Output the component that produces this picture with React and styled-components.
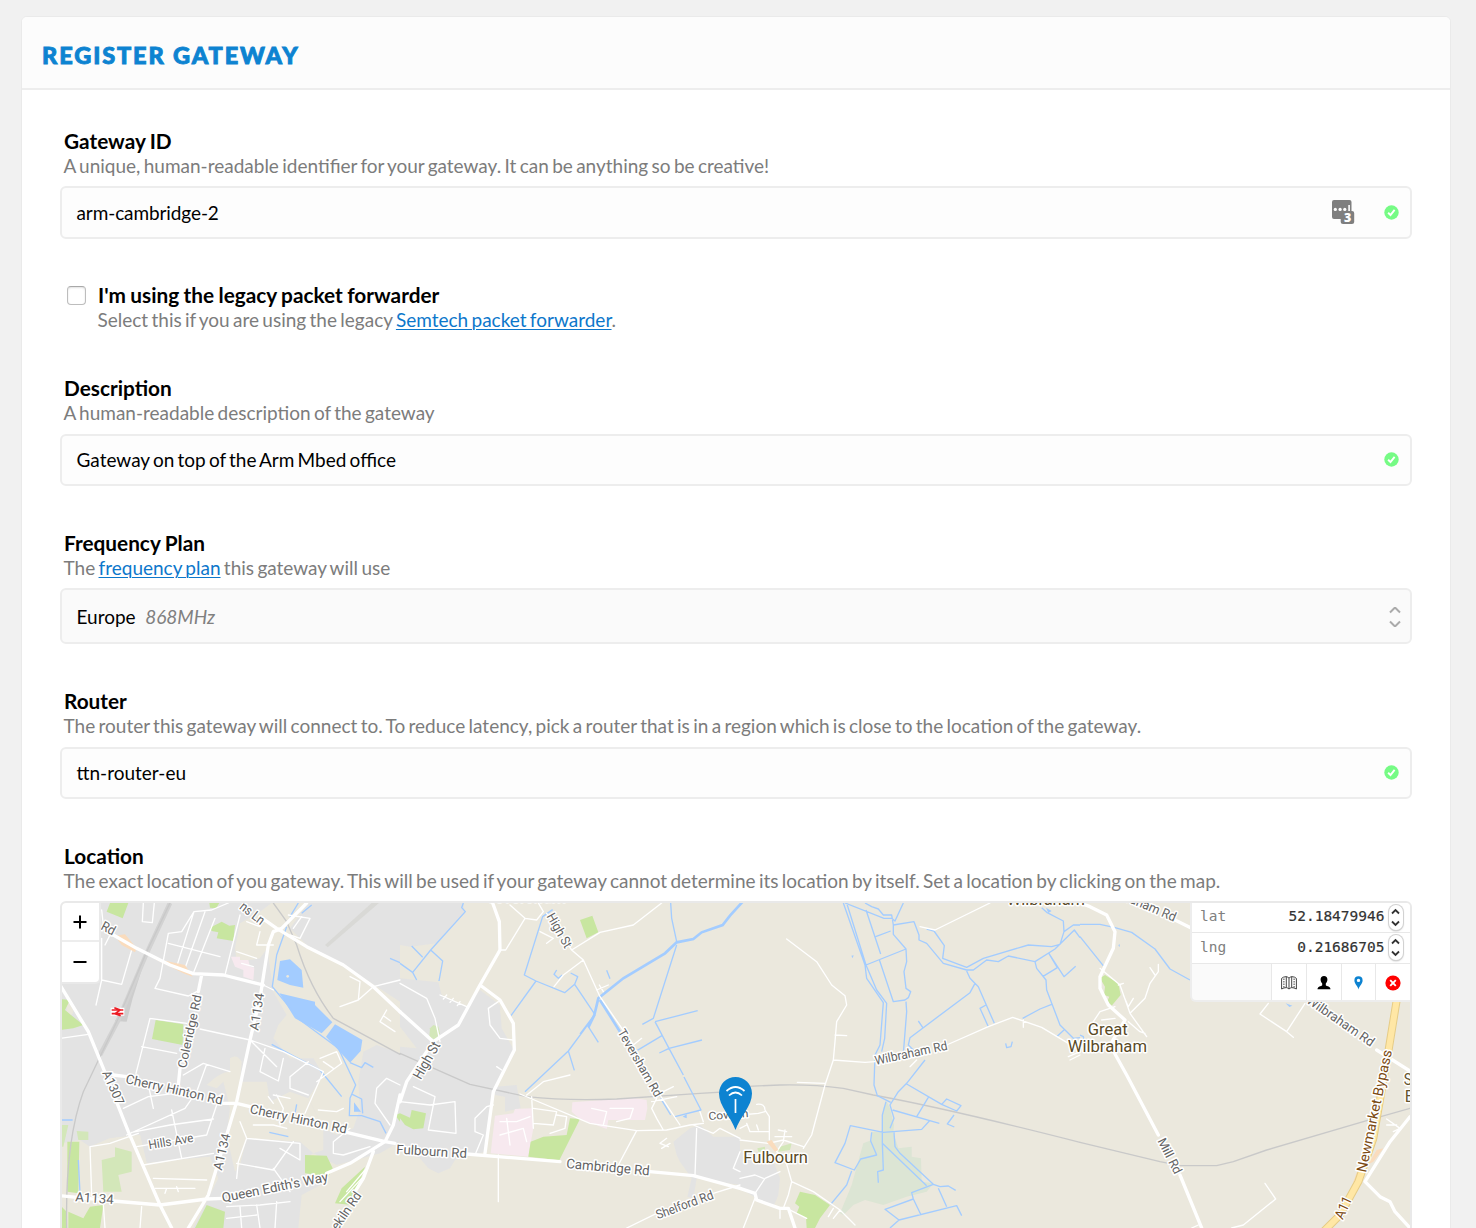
import React from "react";
import styled, { createGlobalStyle, css } from "styled-components";

const GlobalStyle = createGlobalStyle`
  * { box-sizing: border-box; }
  html, body { margin: 0; padding: 0; }
  body {
    height: 1228px;
    overflow: hidden;
    background: #f1f1f1;
    color: #000;
    font-family: Lato, "Open Sans", sans-serif;
  }
`;

const Page = styled.main`
  height: 1228px;
  padding: 16px 25px 0 21px;
  overflow: hidden;
`;

const Card = styled.section`
  height: 1300px;
  background: #fff;
  border: 1px solid #eaeaea;
  border-radius: 6px 6px 0 0;
`;

const CardHeader = styled.header`
  height: 73px;
  padding: 5px 20px 0;
  display: flex;
  align-items: center;
  background: #fcfcfc;
  border-bottom: 2px solid #ededed;
  border-radius: 5px 5px 0 0;
`;

const Title = styled.h1`
  margin: 0;
  color: #0d83d1;
  font-size: 23.5px;
  font-weight: 900;
  line-height: 30px;
  letter-spacing: 1.9px;
  text-transform: uppercase;
  -webkit-text-stroke: 0.9px #0d83d1;
`;

const Form = styled.form`
  display: flex;
  flex-direction: column;
  padding: 39px 38px 0;
`;

const Field = styled.div`
  display: flex;
  flex-direction: column;
  margin-bottom: ${(p) => p.$after || 45}px;
`;

const Caption = styled.div`
  padding-left: ${(p) => (p.$flush ? 0 : 4)}px;
  margin-bottom: ${(p) => p.$gap || 0}px;
`;

const Label = styled.label`
  display: block;
  font-size: 20.8px;
  font-weight: 700;
  line-height: 24px;
  word-spacing: -0.7px;
  white-space: nowrap;
`;

const Hint = styled.div`
  color: #7c7c7c;
  font-size: 19px;
  line-height: 25px;
  margin-bottom: 1px;
  margin-left: -0.5px;
  word-spacing: -1.53px;
  white-space: nowrap;
`;

const Link = styled.a`
  color: #0d77cb;
  text-decoration: underline;
  text-decoration-thickness: 1px;
  text-underline-offset: 2px;
`;

const Box = styled.div`
  display: flex;
  align-items: center;
  height: ${(p) => p.$height || 52}px;
  padding: ${(p) => (p.$select ? 1 : 0)}px 11px 0 14.5px;
  background: ${(p) => (p.$select ? "#fafafa" : "#fdfdfd")};
  border: 2px solid #ededed;
  border-radius: 6px;
  font-size: 19px;
  line-height: 24px;
`;

const Value = styled.span`
  flex: 1;
  word-spacing: -1.65px;
  letter-spacing: ${(p) => p.$spacing || 0}px;
`;

const Muted = styled.em`
  margin-left: 9.5px;
  color: #808080;
`;

const Icon = styled.svg`
  display: block;
  flex: none;
  margin: ${(p) => p.$margin || 0};
`;

const CheckRow = styled.div`
  display: flex;
  gap: 12px;
  padding-left: 7px;
  margin-bottom: 43px;
`;

const Checkbox = styled.span`
  width: 19px;
  height: 19px;
  margin-top: 3px;
  background: #fff;
  border: 1px solid #bdbdbd;
  border-top-color: #a8a8a8;
  border-radius: 4px;
  box-shadow: inset 0 1px 2px rgba(0, 0, 0, 0.12);
`;

const MapFrame = styled.div`
  position: relative;
  height: 400px;
  border: 2px solid #e9e9e9;
  border-radius: 6px;
  overflow: hidden;
  background: #ebe8dd;
`;

const MapSvg = styled.svg`
  display: block;
`;

const ZoomControl = styled.div`
  position: absolute;
  top: 0;
  left: 0;
  width: 39px;
  background: #fff;
  border: solid #e9e9e9;
  border-width: 0 2px 2px 0;
  border-radius: 0 0 6px 0;
`;

const ZoomButton = styled.div`
  display: flex;
  align-items: center;
  justify-content: center;
  height: ${(p) => (p.$first ? 39 : 40)}px;
  padding-right: 1px;
  ${(p) =>
    p.$first &&
    css`
      border-bottom: 2px solid #ededed;
    `}
`;

const Panel = styled.div`
  position: absolute;
  top: 0;
  right: 0;
  width: 220px;
  background: #fafafa;
  border: solid #ededed;
  border-width: 0 0 2px 2px;
  border-radius: 0 0 0 6px;
`;

const Coord = styled.div`
  display: flex;
  align-items: center;
  height: ${(p) => p.$height}px;
  padding: 0 7.5px 0 8px;
  background: #fff;
  border-bottom: 1px solid #e8e8e8;
  font-family: "DejaVu Sans Mono", "Liberation Mono", monospace;
  font-size: 14.5px;
  line-height: 18px;
  color: #808080;
`;

const CoordValue = styled.span`
  flex: 1;
  padding-right: 4px;
  padding-bottom: ${(p) => p.$lift || 2}px;
  text-align: right;
  color: #333;
  -webkit-text-stroke: 0.2px #333;
`;

const CoordName = styled.span`
  padding-bottom: ${(p) => p.$lift || 2}px;
`;

const Stepper = styled.span`
  display: flex;
  align-items: center;
  justify-content: center;
  width: 14px;
  height: 25px;
  margin-top: -1px;
  background: #fff;
  border-radius: 8px;
  box-shadow: 0 0 0 1px #d2d2d2, 0 1px 2px rgba(0, 0, 0, 0.35);
`;

const Tools = styled.div`
  display: flex;
  justify-content: flex-end;
  height: 36px;
`;

const Tool = styled.div`
  display: flex;
  align-items: center;
  justify-content: center;
  width: ${(p) => p.$width || 35}px;
  padding-top: 1px;
  background: #fff;
  border-left: 1px solid #e8e8e8;
`;

const Pin = styled.svg`
  position: absolute;
  left: 657px;
  top: 174px;
`;

/* Map geometry: four tiles, each 1020 units wide, three units to a pixel. */
const urban = [
  "M0 20H640L600 50 540 85 525 160 530 200 600 190 622 160 640 290 680 360 655 390 640 430 690 490 760 490 790 540 745 610 790 700 830 720 880 700 900 640 895 560 910 470 950 450 1020 475V740L960 775 830 810 760 775 735 790 735 840 800 860 725 900 715 999H390L430 930 450 870 430 830 450 785 260 805 240 720 150 730 90 755 60 735 0 745Z M745 24H1020V320L860 215 740 150 690 100Z",
  "M0 24H190L195 55 110 145 30 155 0 150Z M0 250 50 255 115 262 125 300 200 335 240 285 300 330 305 400 345 470 280 590 255 770 165 795 150 820 115 835 85 820 60 790 0 770Z M285 575 350 570 362 640 315 650 315 605 285 600Z M820 740 870 700 900 690 940 725 1020 725V870L890 850 880 910 862 905 875 850 840 800 830 780Z",
  "M0 770 60 790 100 800 120 850 115 900 100 935 50 910 0 880Z",
  "",
];
const landPatches = [
  "M510 490Q530 475 545 500L540 560 620 560 630 620 690 590 745 610 790 700 790 765 760 775 720 740 560 730 540 810 525 830 500 720 510 640 490 560 470 580 440 570Q480 530 510 530Z M20 320Q60 350 20 370Z M0 750 90 755 150 730 240 720 260 805 450 785 475 850 400 999H0Z",
  "M0 395 50 460 0 455Z M300 345 335 370 335 405 310 395Z",
  "",
  "",
];
const greens = [
  "M150 24H205L188 70 140 50Z M448 24H478L468 40 450 38Z M450 98 485 80 508 92 525 90 520 138 470 130 475 112 455 108Z M0 312 30 315 15 345 45 370 70 390 40 400 0 405Z M287 375 370 388 368 450 276 432Z M735 780 800 782 818 820 805 845 735 835Z M915 815 875 930 825 925 845 880Z M22 740 58 740 55 895 22 890Z M25 950 70 970 90 935 130 930 120 999H25Z M440 930 495 950 490 999H405Z M0 930 20 950V999H0Z M1005 660 1020 655V680Z",
  "M540 75 577 62 595 112 560 130Z M35 645 78 655 70 700 40 703 15 690 0 670V655L30 668Z M510 670 540 672 478 796 385 785 392 740 430 725 500 720Z",
  "M180 890 225 900 270 930 240 970 225 999H200L198 968 170 955 178 935 165 925Z",
  "M60 250 75 240 115 265 122 300 105 320 95 332 82 318 88 305 72 300 75 275Z",
];
const paleGreens = [
  "M50 708 85 710 85 735 55 735Z M125 795 165 785 165 757 215 770 215 830 175 840 185 890 130 890Z M0 690 25 690 10 755 0 755Z",
  "M90 400 100 390 115 395 120 415 105 435 88 425Z",
  "M120 755 155 745 150 765 115 770Z M52 760 75 755V770H55Z",
  "",
];
const wetlands = [
  "",
  "",
  "M440 620 450 640 462 690 460 715 475 760 515 755 515 785 543 790 545 860 580 865 560 890 500 905 430 930 375 915 340 930 310 960 300 955 335 870 360 780 370 745 395 735 395 710 425 712 430 640Z",
  "",
];
const pinks = [
  "M513 185 540 185 540 195 565 195 570 215 583 218 580 255 550 245 550 225 525 215Z",
  "M285 662 340 655 345 642 395 640 400 700 385 785 272 775Z M517 622 700 608 740 615 742 640 735 675 625 675 620 702 540 672 515 650Z",
  "",
  "",
];
const oranges = [
  "M165 122 195 118 230 160 225 172 185 150Z M280 190 375 210 398 245 370 235Z",
  "",
  "M80 740 95 735 115 765 105 770Z",
  "M910 760 880 800 865 808 890 765Z M835 820 820 860 830 870 845 830Z",
];
const ponds = [
  "M660 198 690 193 725 225 730 278 690 270 652 255Z M658 295 765 320 765 330 817 382 785 415 705 370Z M825 388 907 435 902 468 870 503 798 425Z M882 622 903 650H882Z",
  "M848 665 860 658V670Z",
  "M918 38 935 48 925 54Z M334 182 341 181 338 190Z",
  "M617 325 637 332 628 336Z M115 150 120 148 118 157Z",
];
const streams = [
  "M680 95 650 180 637 275 720 375 835 460 887 570 870 610 868 662 905 662 960 680 978 715 M755 30 725 55 M715 24 690 65 M635 448 780 525 845 605 M710 628 705 655 M628 712 685 725 M870 503 905 518 915 503 940 517 M877 598 905 612 908 655 M0 675H38 M990 190 1020 203 M55 795 60 895",
  "M190 24 185 38 196 50 92 165 38 232 50 255 M92 165 128 198 117 258 M35 153 68 187 M0 205 38 232 M458 44 428 65 373 240 408 258 494 293 524 268 533 245 512 234 M408 258 333 362 M524 268 583 356 M470 225 462 238 475 250 487 240 M620 226 630 251 M565 395 595 442 M540 417 583 360 M585 360 505 468 375 590 M505 468 523 526 M812 24 815 70 830 140 M830 150 760 370 727 388 M765 380 893 347 M765 380 807 460 850 540 M778 474 807 460 906 435 M786 422 712 466 M852 546 903 645 825 665 M782 610 812 660",
  "M310 24 375 210 380 250 430 323 420 450 405 480 402 570 412 602 452 622 M320 24 378 210 410 285 440 325 434 430 425 470 M315 24 432 70 455 70 465 78 490 24 M375 24 395 35 415 42 430 60 455 60 460 90 522 80 537 120 537 135 560 145 610 205 680 225 700 225 740 195 775 200 805 183 885 200 M378 45 422 177 M407 125 452 108 M460 90 460 118 498 162 500 200 492 230 498 280 512 290 505 308 495 315 460 320 418 194 M378 210 498 162 M498 320 500 350 490 475 M560 102 582 108 613 152 608 190 680 217 730 190 865 150 935 155 960 148 972 110 970 78 920 52 905 38 M972 110 1000 90 1020 90 M885 200 945 162 1003 105 1020 128 M885 200 890 220 918 255 920 285 960 390 1000 430 1020 428 M908 245 952 218 927 176 972 245 1007 214 M935 328 900 342 848 370 M950 425 972 405 M680 228 690 250 715 275 763 385 M738 330 720 340 745 395 M705 265 690 293 510 428 505 450 530 475 M535 378 548 397 M555 495 500 565 475 590 450 630 462 670 450 700 M500 567 605 628 650 648 663 632 620 612 605 628 M565 607 530 665 M458 645 598 685 M642 660 622 687 643 696 M568 678 545 703 430 712 331 692 315 745 285 803 343 825 362 792 410 780 392 738 395 712 M438 620 427 660V745L430 825 413 830 415 863 M335 828 320 870 272 928 M427 745 560 872 M462 712 465 755 480 775 580 868 600 875 625 873 647 886 M580 868 515 893 520 912 542 958 M595 880 620 935 M520 912 435 943 477 975 650 932 665 962 M477 975 450 999 M797 445 800 458 813 455 817 440",
  "M0 88H60L105 98 155 112 225 162 270 222 330 255 M0 125 72 215 M0 420 10 425 12 435",
];
const rails = [
  "M330 24 260 170 175 370 70 590Q15 740 20 999 M640 24 680 80 710 150Q750 280 820 370L1020 478",
  "M0 475 210 568 380 605Q500 618 650 612L900 595 1020 588",
  "M-40 577 120 570Q220 568 310 580L400 600Q620 640 1020 742",
  "M0 742 240 800 300 812H410L460 800 560 765 860 677 990 640",
];
const mainRoads = [
  "M160 120 230 160 330 210 400 236 490 240 610 270 M425 240 415 290 M740 24 665 100 640 110 625 150 600 310 570 435 530 620 500 720 445 900 385 999 M600 65 650 100 740 155 850 210 940 275 1020 350 M0 270 85 410 130 520 205 710 300 930 335 999 M0 902 160 918 300 930 440 912 490 910 M800 835 870 805 975 740 1000 690 1020 600 M160 540 200 545 M490 625 530 625 570 635 M860 712 975 740 1005 745 M940 770 910 850 885 890 M360 520 355 570",
  "M0 350 100 440 175 390 240 270 300 165 298 80 278 24 M240 270 300 315 340 385 343 465 280 590 265 700 255 775 M100 440 20 560 0 620 M200 777 480 800 M750 830 880 842 1020 880",
  "M0 880 45 895 50 915 120 940 145 940 165 999",
  "M0 24 30 35 80 60 105 110 100 160 60 245 60 280 85 330 135 375 90 450 140 540 235 720 M300 840 365 999 M285 75 335 100 M890 465 990 528 M990 665 930 740 855 860 900 905 930 920 945 950 990 999",
];
const localRoads = [
  "M125 45 130 90 155 110 135 150 M215 165 185 268 125 255 108 330 M125 255V130 M250 24 247 80 277 83 283 24 M325 115 300 250 285 280 385 303 410 290 M325 115 365 110 402 50 455 45 505 24 M325 145 480 185 M402 50 350 215 M435 50 375 220 M465 70 400 235 M540 60 495 240 M610 270 640 285 M270 370 228 535 M270 370 380 385 M245 455 350 475 M420 402 570 435 670 470 790 530 M440 508 410 590 375 640 200 720 M370 540 430 505 510 530 M190 640 265 605 390 590 M215 712 330 690 460 672 M230 755 440 720 480 600 M250 810 460 775 M265 570 280 640 M335 645 365 790 M570 435 650 515 M615 460 600 530 655 558 670 490 M745 500 690 545 690 580 745 600 M790 530 735 655 M780 490 830 470 845 505 770 560 M790 500 820 520 M1020 570 980 550 950 580 945 625 990 690 M820 740 820 775 850 780 930 755 M820 740 870 700 M560 730 720 745 720 795 660 760 M540 680 560 730 535 800 530 850 M530 805 640 825 700 740 M640 820 690 890 M500 935 600 930 690 920 M500 970 590 960 M540 935 545 999 M590 930 600 999 M650 920 645 999 M90 755 95 900 M90 755 150 745 235 715 M280 850 440 855 M285 880 405 880 M320 880 315 895 M350 875 355 890 M245 935 240 999 M130 930 135 999 M0 430 85 418 M600 110 590 150 640 150 M560 80 600 95 M530 170 590 190 M545 205 580 215 M870 245 900 260 895 315 940 275 1020 255 M895 315 840 335 M980 345 960 380 1005 410 M970 362 992 378 M860 890 915 825 M840 920 905 850 M775 645 830 650 850 640 M650 600 670 640 660 690 M580 690 640 690 680 700 M625 605 640 625 M640 600 690 610 M685 60 750 70 720 130 690 120 M725 65 700 100",
  "M298 165 317 165 375 70 330 30 M375 70 410 75 430 50 415 24 M440 55 515 165 550 195 600 305 700 450 M515 165 600 112 700 90 785 24 M550 195 490 240 462 275 M420 110 460 130 440 145 M590 285 625 270 M598 270 610 290 M700 450 725 430 M780 600 840 690 M790 590 820 575 M755 620 830 605 M360 597 570 685 710 707 800 705 870 690 910 685 M380 600 430 560 510 540 M395 605 400 700 M400 640 470 650 460 690 400 685 M470 660 500 665 495 700 450 715 M710 707 655 810 M770 610 755 640 770 670 790 705 M800 730 780 745 805 755 M785 760 810 745 M890 700 885 840 M0 265 80 310 105 370 120 440 M120 300 200 335 M140 300 130 312 M160 310 150 322 M180 320 172 332 M295 320 265 340 270 390 300 430 340 435 M0 620 90 630 165 620 168 715 85 705 105 605 40 575 M225 780 250 720 225 710 225 670 260 635 280 630 M290 515 305 525 M295 780V920 M680 999 770 955 M940 895 1020 870 M880 690 940 715 960 700 1020 730 M900 650 910 680 M575 640 620 650 610 690 M630 640 700 640 690 670 650 680 M300 680 350 680 390 665 M300 720 370 700 380 740 M320 670 330 750 M1020 770 1000 820 1020 830",
  "M140 132 230 200 275 270 315 302 320 330 290 380 285 440 280 495 255 570 215 720 190 760 M280 495 375 502 405 500 M285 420 320 422 M255 565 172 562 M540 95 585 105 750 24 M510 515 530 495 M620 450 745 395 818 367 905 397 985 445 M850 375V397 M0 735 85 745 130 735 190 755 M50 628Q75 625 75 645L88 665 88 735 M0 660 55 655 75 650 M20 685 30 710 85 710 M50 690 55 705 M115 705 140 710 M135 705 130 740 M155 725 105 725 M130 740 110 770 135 790 155 860 220 890 300 945 345 990 M45 895 75 850 120 830 M155 860 145 900 130 940 M0 850 45 840 70 850 M120 945 120 970 M140 940 200 970 M280 940 265 965 M300 945 280 970 M45 910 10 999 M985 485 1020 470 M0 700 20 690",
  "M540 357 620 410 640 427 M540 357 565 325 M620 410 675 325 M60 220 120 270 150 355 200 425 M115 270 130 265 M130 300 145 335 160 310 M150 355 195 310 210 265 235 230 235 208 M210 218 225 240 M145 380 180 410 195 415 M65 375 105 370 M40 380 60 350 105 335 M555 865 587 912 490 990 455 999 M0 480 -30 495 M335 999 355 990 M920 672 960 700 940 710 M920 690 950 690",
];

const roadGrey = "#636363";
/* text, start x, start y, end x, end y, size, colour */
const labels = [
  ["Rd", 120, 102, 158, 122, 40],
  ["ns Ln", 536, 40, 602, 91, 40],
  ["Coleridge Rd", 378, 521, 425, 302, 37],
  ["A1134", 595, 408, 612, 296, 38],
  ["A1307", 126, 533, 170, 633, 38],
  ["Cherry Hinton Rd", 195, 564, 485, 629, 39],
  ["Cherry Hinton Rd", 568, 654, 858, 716, 39],
  ["Hills Ave", 268, 763, 402, 740, 37],
  ["A1134", 485, 828, 511, 719, 38],
  ["A1134", 45, 919, 160, 927, 39],
  ["Queen Edith's Way", 488, 922, 806, 858, 39],
  ["ekiln Rd", 833, 1008, 906, 902, 39],
  ["Teversham", 1278, 22, 1518, 22, 46, "#66542e"],
  ["High St", 1459, 64, 1515, 162, 39],
  ["High St", 1082, 556, 1142, 450, 42],
  ["Teversham Rd", 1672, 411, 1786, 609, 37],
  ["Fulbourn Rd", 1008, 776, 1220, 789, 39],
  ["Cambridge Rd", 1518, 819, 1768, 841, 40],
  ["Shelford Rd", 1793, 973, 1963, 910, 38],
  ["Cowlan", 1946, 675, 2066, 666, 33],
  ["Fulbourn", 2050, 803, 2244, 803, 49, "#5a4a26"],
  ["Wilbraham Rd", 2447, 510, 2664, 464, 38],
  ["Wilbraham", 2840, 30, 3075, 30, 50, "#5a4a26"],
  ["Great", 3083, 420, 3203, 420, 47, "#5a4a26"],
  ["Wilbraham", 3023, 471, 3261, 471, 49, "#5a4a26"],
  ["raham Rd", 3196, 18, 3342, 80, 39],
  ["Wilbraham Rd", 3737, 322, 3932, 456, 39],
  ["Mill Rd", 3292, 737, 3344, 840, 38],
  ["Newmarket Bypass", 3918, 834, 3996, 468, 42, "#7b4a12"],
  ["A11", 3848, 976, 3877, 912, 42, "#7b4a12"],
  ["S", 4031, 570, 4056, 570, 48, "#66542e"],
  ["Bo", 4034, 620, 4090, 620, 48, "#66542e"],
];

function Layer({ tiles, ...paint }) {
  return (
    <g strokeLinejoin="round" strokeLinecap="round" fill="none" {...paint}>
      {tiles.map((d, i) =>
        d ? <path key={i} d={d} transform={`translate(${i * 1020})`} /> : null
      )}
    </g>
  );
}

function MapLabel({ text, x, y, x2, y2, size, color }) {
  const length = Math.hypot(x2 - x, y2 - y);
  const angle = (Math.atan2(y2 - y, x2 - x) * 180) / Math.PI;
  return (
    <text
      transform={`translate(${x} ${y}) rotate(${angle})`}
      fontSize={size}
      textLength={length}
      lengthAdjust="spacingAndGlyphs"
      fill={color || roadGrey}
    >
      {text}
    </text>
  );
}

function MapDrawing() {
  return (
    <MapSvg width="1348" height="325" viewBox="6 24 4044 975">
      <rect width="4080" height="1000" fill="#ebe8dd" />
      <Layer tiles={urban} fill="#e3e3e3" />
      <Layer tiles={landPatches} fill="#ebe8dd" />
      <Layer tiles={wetlands} fill="#dce5d4" />
      <Layer tiles={pinks} fill="#f7e9ef" />
      <Layer tiles={paleGreens} fill="#d3e7b9" />
      <Layer tiles={greens} fill="#c8e6a0" />
      <Layer tiles={ponds} fill="#a3ccff" />
      <path d="M795 150 935 24H957L803 157Z" fill="#d9d9d6" />
      <path d="M242 200 210 300 165 378 200 380 218 310 245 225Z" fill="#cdcdcd" />
      <path d="M330 24 260 175 175 375 120 480" stroke="#d2d2d2" strokeWidth="14" fill="none" />
      <Layer tiles={rails} stroke="#c9c9c9" strokeWidth="4" />
      <Layer tiles={streams} stroke="#a3ccff" strokeWidth="4" strokeLinecap="butt" />
      <path
        d="M2050 18 2010 62 1988 90 1925 112 1900 132 1850 142 1815 175 1690 250 1615 310 1603 360 1585 397 M1620 315 1680 410"
        stroke="#a3ccff" strokeWidth="8" fill="none"
      />
      <circle cx="683" cy="244" r="4" fill="#ebe8dd" />
      <Layer tiles={localRoads} stroke="#fff" strokeWidth="4" />
      <Layer tiles={oranges} fill="#fadcbd" />
      <Layer tiles={mainRoads} stroke="#fff" strokeWidth="10" />
      <g fill="none" strokeLinejoin="round">
        <path d="M4011 310 3985 470 3940 730 3895 860 3840 960 3785 1015" stroke="#e6cc86" strokeWidth="24" />
        <path d="M4011 310 3985 470 3940 730 3895 860 3840 960 3785 1015" stroke="#ffe7a5" strokeWidth="18" />
      </g>
      <path d="M152 350H193" stroke="#fff" strokeWidth="24" />
      <path d="M155 345H190M155 356H190M163 338 181 345 165 356 182 362" stroke="#ed1c24" strokeWidth="5" fill="none" />
      <g
        fontFamily="Roboto, 'Open Sans', sans-serif"
        stroke="#fff" strokeWidth="9" strokeLinejoin="round" paintOrder="stroke"
      >
        {labels.map(([text, x, y, x2, y2, size, color], i) => (
          <MapLabel key={i} {...{ text, x, y, x2, y2, size, color }} />
        ))}
      </g>
    </MapSvg>
  );
}

const ValidIcon = () => (
  <Icon width="15" height="15" viewBox="0 0 15 15" $margin="0 0 1px">
    <circle cx="7.5" cy="7.5" r="7.2" fill="#76fb85" />
    <path d="M4.1 7.7 6.5 10 10.6 4.9" stroke="#fff" strokeWidth="1.9" fill="none" />
  </Icon>
);

const PasswordIcon = () => (
  <Icon width="23" height="25" viewBox="0 0 23 25" $margin="0 29px 0 0">
    <path d="M2 0H17.5Q19.5 0 19.5 2V11H20Q22.2 11 22.2 13V22Q22.2 24 20 24H11Q8.7 24 8.7 22V19H2Q0 19 0 17V2Q0 0 2 0Z" fill="#7f7f7f" />
    <g fill="#fff">
      <circle cx="3.3" cy="9.4" r="1.6" />
      <circle cx="8.1" cy="9.4" r="1.6" />
      <circle cx="12.8" cy="9.4" r="1.6" />
      <rect x="16.3" y="5" width="1.6" height="6" />
    </g>
    <text x="15.6" y="22.2" textAnchor="middle" fontFamily="Open Sans, sans-serif" fontWeight="800" fontSize="12.5" fill="#fff">3</text>
  </Icon>
);

const Chevrons = ({ width, height, color, weight, gap, margin }) => {
  const m = height / 2;
  const w = width / 2;
  return (
    <Icon width={width} height={height} $margin={margin}>
      <path
        d={`M1 ${m - gap} L${w} ${m - gap - w + 1} L${width - 1} ${m - gap} M1 ${m + gap} L${w} ${m + gap + w - 1} L${width - 1} ${m + gap}`}
        stroke={color} strokeWidth={weight} fill="none"
      />
    </Icon>
  );
};

const StepperArrows = () => (
  <Stepper>
    <Chevrons width={9} height={19} color="#333" weight={1.8} gap={4} />
  </Stepper>
);

function Described({ label, hint, gap }) {
  return (
    <Caption $gap={gap}>
      <Label>{label}</Label>
      <Hint>{hint}</Hint>
    </Caption>
  );
}

export default function App() {
  return (
    <>
      <GlobalStyle />
      <Page>
        <Card>
          <CardHeader>
            <Title>Register Gateway</Title>
          </CardHeader>
          <Form>
            <Field $after={44}>
              <Described gap={7} label="Gateway ID" hint="A unique, human-readable identifier for your gateway. It can be anything so be creative!" />
              <Box $height={53}>
                <Value $spacing={-0.1}>arm-cambridge-2</Value>
                <PasswordIcon />
                <ValidIcon />
              </Box>
            </Field>

            <CheckRow>
              <Checkbox />
              <Caption $flush>
                <Label>I'm using the legacy packet forwarder</Label>
                <Hint>
                  Select this if you are using the legacy <Link>Semtech packet forwarder</Link>.
                </Hint>
              </Caption>
            </CheckRow>

            <Field>
              <Described gap={8} label="Description" hint="A human-readable description of the gateway" />
              <Box>
                <Value>Gateway on top of the Arm Mbed office</Value>
                <ValidIcon />
              </Box>
            </Field>

            <Field>
              <Described
                gap={7}
                label="Frequency Plan"
                hint={<>The <Link>frequency plan</Link> this gateway will use</>}
              />
              <Box $height={56} $select>
                <Value>Europe<Muted>868MHz</Muted></Value>
                <Chevrons width={12} height={20} color="#aaa" weight={2} gap={4.5} margin="0 -2px 0 0" />
              </Box>
            </Field>

            <Field>
              <Described gap={8} label="Router" hint="The router this gateway will connect to. To reduce latency, pick a router that is in a region which is close to the location of the gateway." />
              <Box>
                <Value>ttn-router-eu</Value>
                <ValidIcon />
              </Box>
            </Field>

            <Field>
              <Described gap={7} label="Location" hint="The exact location of you gateway. This will be used if your gateway cannot determine its location by itself. Set a location by clicking on the map." />
              <MapFrame>
                <MapDrawing />
                <Pin width="33" height="53" viewBox="0 0 33 53">
                  <path d="M16.5 53C12 40 0 29 0 16.5A16.5 16.5 0 0 1 33 16.5C33 29 21 40 16.5 53Z" fill="#0d83d1" />
                  <path d="M7.5 14Q16.5 6 25.5 14M10 18.5Q16.5 12.5 23 18.5M16.5 22V36" stroke="#fff" strokeWidth="1.7" fill="none" />
                </Pin>
                <ZoomControl>
                  <ZoomButton $first>
                    <Icon width="14" height="14"><path d="M.5 7H13.5M7 .5V13.5" stroke="#000" strokeWidth="2" /></Icon>
                  </ZoomButton>
                  <ZoomButton>
                    <Icon width="14" height="14"><path d="M.5 7H13.5" stroke="#000" strokeWidth="2" /></Icon>
                  </ZoomButton>
                </ZoomControl>
                <Panel>
                  <Coord $height={30}>
                    <CoordName $lift={4}>lat</CoordName>
                    <CoordValue $lift={4}>52.18479946</CoordValue>
                    <StepperArrows />
                  </Coord>
                  <Coord $height={31}>
                    <CoordName>lng</CoordName>
                    <CoordValue>0.21686705</CoordValue>
                    <StepperArrows />
                  </Coord>
                  <Tools>
                    <Tool>
                      <Icon width="16" height="14" viewBox="0 0 16 14" fill="none" stroke="#444" strokeWidth="1">
                        <path d="M.6 2.4Q2 .8 5.3 .6Q7 1 8 2.2Q9 1 10.7 .6Q14 .8 15.4 2.4V13Q13 11.6 10.7 11.6Q9 12 8 13Q7 12 5.3 11.6Q3 11.6 .6 13ZM5.3 .6V11.6M8 2.2V13M10.7 .6V11.6" />
                        <path d="M2.9 2.5V11.5M13.1 2.5V11.5" strokeDasharray="1.5 1" />
                      </Icon>
                    </Tool>
                    <Tool>
                      <Icon width="14" height="14" viewBox="0 0 14 14">
                        <path d="M7 0C9.2 0 10.4 1.4 10.4 3.5C10.4 5.4 9.6 6.6 8.8 7.5V9.3C10 10.5 13.4 10.3 13.5 13.2H.5C.6 10.3 4 10.5 5.2 9.3V7.5C4.4 6.6 3.6 5.4 3.6 3.5C3.6 1.4 4.8 0 7 0Z" />
                      </Icon>
                    </Tool>
                    <Tool $width={34}>
                      <Icon width="9" height="14" viewBox="0 0 9 14">
                        <path fillRule="evenodd" d="M4.5 13.4C3.8 10 .4 7.7 .4 4.4A4.1 4.1 0 0 1 8.6 4.4C8.6 7.7 5.2 10 4.5 13.4ZM4.5 2.7A1.7 1.7 0 1 0 4.5 6.1A1.7 1.7 0 0 0 4.5 2.7Z" fill="#0d83d1" />
                      </Icon>
                    </Tool>
                    <Tool>
                      <Icon width="16" height="16" viewBox="0 0 16 16">
                        <circle cx="8" cy="8" r="7.6" fill="#f00" />
                        <path d="M5.2 5.2 10.8 10.8M10.8 5.2 5.2 10.8" stroke="#fff" strokeWidth="1.9" />
                      </Icon>
                    </Tool>
                  </Tools>
                </Panel>
              </MapFrame>
            </Field>
          </Form>
        </Card>
      </Page>
    </>
  );
}
